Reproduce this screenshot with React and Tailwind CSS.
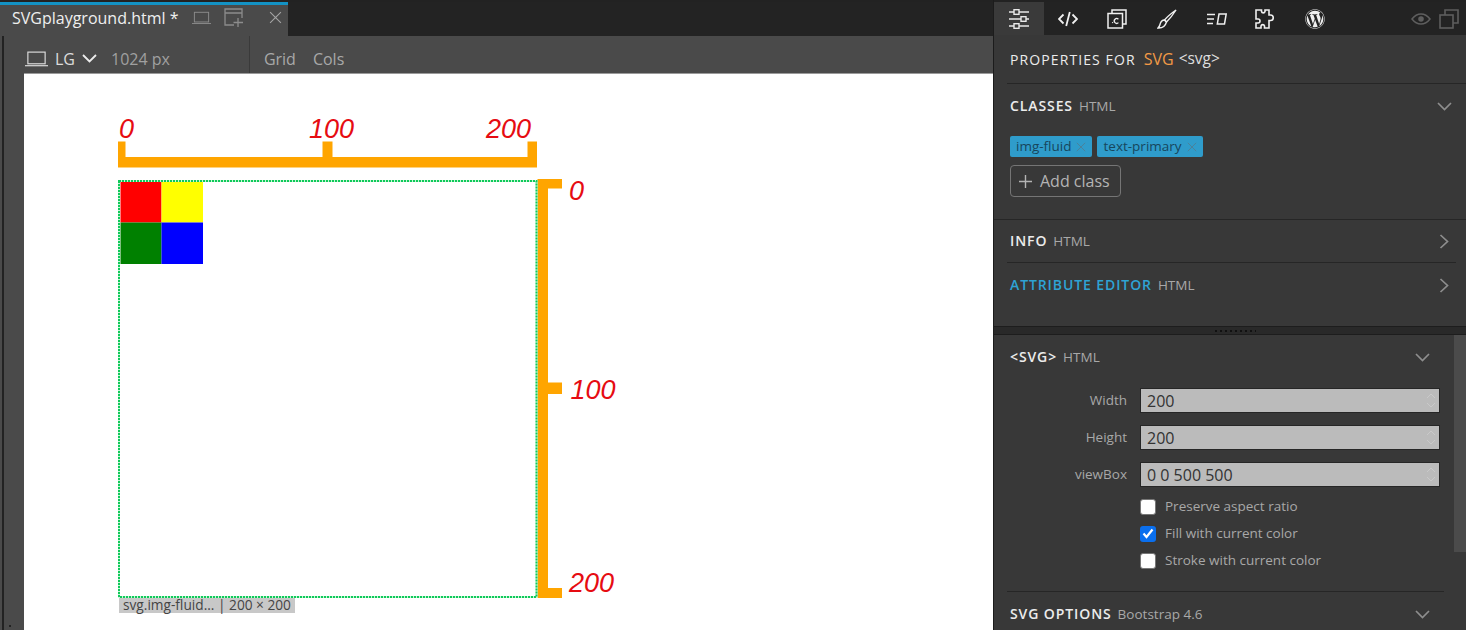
import React from "react";
import { FaWordpress } from "react-icons/fa";

const font = { fontFamily: '"Open Sans", "Noto Sans", sans-serif' };

function Sliders() {
  return (
    <svg width="22" height="22" viewBox="0 0 22 22" fill="none" stroke="#e8e8e8" strokeWidth="1.4">
      <path d="M1 4H6M11 4H21M1 11H13M18 11H21M1 18H6M11 18H21" />
      <rect x="6" y="1.7" width="5" height="4.6" fill="#3a3a3a" />
      <rect x="13" y="8.7" width="5" height="4.6" fill="#3a3a3a" />
      <rect x="6" y="15.7" width="5" height="4.6" fill="#3a3a3a" />
    </svg>
  );
}
function CodeIcon() {
  return (
    <svg width="20" height="16" viewBox="0 0 20 16" fill="none" stroke="#f0f0f0" strokeWidth="1.8">
      <path d="M5.5 3.5L1 8l4.5 4.5M14.5 3.5L19 8l-4.5 4.5M11.8 1L8.2 15" />
    </svg>
  );
}
function CssIcon() {
  return (
    <svg width="20" height="20" viewBox="0 0 20 20" fill="none" stroke="#efefef" strokeWidth="1.5">
      <path d="M5 4V1h14v14h-3" />
      <rect x="1" y="4.5" width="14.5" height="14.5" />
      <circle cx="5.6" cy="13.6" r="0.7" fill="#efefef" stroke="none" />
      <path d="M11.4 10.2a2.4 2.4 0 1 0 0 3.4" strokeWidth="1.3" />
    </svg>
  );
}
function BrushIcon() {
  return (
    <svg width="20" height="20" viewBox="0 0 20 20" fill="none" stroke="#efefef" strokeWidth="1.4">
      <path d="M19 1C15.5 3.5 10 8 7.5 11l2 2C12.5 10 16.5 5 19 1z" />
      <path d="M7.5 11C4.5 11 3.5 13.5 3 15.5 2.7 17 2 18 1 19c3.500.2 7-.8 8.500-6z" />
    </svg>
  );
}
function BlockIcon() {
  return (
    <svg width="20" height="12" viewBox="0 0 20 12" fill="none" stroke="#efefef" strokeWidth="1.5">
      <path d="M0 1.500H8M0 6H7M0 10.500H6" />
      <path d="M12 1h7.200l-1.700 10h-7.200z" />
    </svg>
  );
}
function PuzzleIcon() {
  return (
    <svg width="21" height="20" viewBox="0 0 21 20" fill="none" stroke="#efefef" strokeWidth="1.6">
      <path d="M1 1h5.500v1.500a1.800 1.800 0 0 0 3.500 0V1h4v5h1.500a2.300 2.300 0 0 1 0 5.500H14V19H9.500v-2a1.800 1.800 0 0 0-3.500 0v2H1v-5h2a1.800 1.800 0 0 0 0-4H1z" />
    </svg>
  );
}
function EyeIcon() {
  return (
    <svg width="20" height="12" viewBox="0 0 20 12" fill="none" stroke="#5e5e5e" strokeWidth="1.5">
      <path d="M1 6c2.500-3.300 5.500-5 9-5s6.500 1.700 9 5c-2.500 3.300-5.500 5-9 5S3.500 9.300 1 6z" />
      <circle cx="10" cy="6" r="2.800" fill="#5e5e5e" stroke="none" />
    </svg>
  );
}
function DupIcon() {
  return (
    <svg width="20" height="20" viewBox="0 0 20 20" fill="none" stroke="#5e5e5e" strokeWidth="1.6">
      <path d="M6 6V1h13v13h-5" />
      <rect x="1" y="6" width="13" height="13" />
    </svg>
  );
}
function Laptop({ w, h, color, sw = 1.2 }) {
  return (
    <svg width={w} height={h} viewBox="0 0 24 16" fill="none" stroke={color} strokeWidth={sw}>
      <rect x="3" y="0.800" width="18" height="12.200" />
      <path d="M0 15H24" />
    </svg>
  );
}
function NewWin() {
  return (
    <svg width="20" height="20" viewBox="0 0 20 20" fill="none" stroke="#8c8c8c" strokeWidth="1.3">
      <path d="M10 17H1V1h17v9M1 5h17" />
      <path d="M14 10v9M9.500 14.500H19" />
    </svg>
  );
}
function X({ size, color, sw = 1 }) {
  return (
    <svg width={size} height={size} viewBox="0 0 12 12" fill="none" stroke={color} strokeWidth={sw}>
      <path d="M1 1L11 11M11 1L1 11" />
    </svg>
  );
}
function ChevDown({ color = "#8e8e8e", w = 15, sw = 1.7 }) {
  return (
    <svg width={w} height="9" viewBox="0 0 15 9" fill="none" stroke={color} strokeWidth={sw}>
      <path d="M1 1L7.500 7.500L14 1" />
    </svg>
  );
}
function ChevRight() {
  return (
    <svg width="10" height="15" viewBox="0 0 10 15" fill="none" stroke="#8e8e8e" strokeWidth="1.7">
      <path d="M1.500 1L8.500 7.500L1.500 14" />
    </svg>
  );
}

function Header({ title, sub, titleClass = "text-[#ececec]", children }) {
  return (
    <div className="flex items-center justify-between pl-[16px]">
      <div className="flex items-baseline gap-[6px] leading-[18px]">
        <span className={`text-[14px] font-semibold tracking-[0.9px] ${titleClass}`}>{title}</span>
        <span className="text-[13.5px] text-[#a8a8a8]">{sub}</span>
      </div>
      {children}
    </div>
  );
}

function Tag({ text }) {
  return (
    <div className="flex h-[21px] items-center gap-[5px] rounded-[2px] bg-[#2f9ccb] px-[6px] text-[13.5px] text-[#17465c]">
      <span>{text}</span>
      <X size={10} color="#4f7d92" />
    </div>
  );
}

function Field({ label, value }) {
  return (
    <div className="flex h-[25px] items-center">
      <div className="w-[133px] text-right text-[13.5px] text-[#a8a8a8]">{label}</div>
      <div className="ml-[13px] flex h-[25px] w-[300px] items-center justify-between border border-[#262626] bg-[#bbbbbb] pl-[6px] pr-[3px] text-[16px] text-[#333]">
        <span>{value}</span>
        <div className="flex flex-col gap-[3px]">
          <svg width="10" height="6" viewBox="0 0 10 6" fill="none" stroke="#c9c9c9"><path d="M1 5L5 1L9 5" /></svg>
          <svg width="10" height="6" viewBox="0 0 10 6" fill="none" stroke="#c9c9c9"><path d="M1 1L5 5L9 1" /></svg>
        </div>
      </div>
    </div>
  );
}

function Check({ label, checked }) {
  return (
    <div className="flex h-[15px] items-center gap-[9px] pl-[146px]">
      {checked ? (
        <div className="flex h-[16px] w-[16px] items-center justify-center rounded-[3px] bg-[#0a6fee]">
          <svg width="12" height="11" viewBox="0 0 12 11" fill="none" stroke="#fff" strokeWidth="2.200"><path d="M1.500 5.500L4.500 9L10.500 1.500" /></svg>
        </div>
      ) : (
        <div className="h-[16px] w-[16px] rounded-[3px] border border-[#777] bg-white" />
      )}
      <span className="text-[13.5px] text-[#a8a8a8]">{label}</span>
    </div>
  );
}

function Canvas() {
  const o = "#ffa500";
  const t = { fontFamily: '"Liberation Sans", Arial, sans-serif', fontStyle: "italic", fontSize: 27, fill: "#e60c12" };
  return (
    <div className="relative min-h-0 flex-1 overflow-hidden bg-white">
      {/* canvas origin = page (24,74) */}
      <svg width="970" height="556" viewBox="24 74 970 556" className="block">
        <path fill={o} d="M118 141.500h7.500V157H322.500V141.500h10V157H527.500V141.500h9.500V167.500H118z" />
        <path fill={o} d="M537.500 179H562V188.500H548V382.500H562V394H548V588H562V598H537.500z" />
        <text x="119" y="138" style={t}>0</text>
        <text x="309" y="138" style={t}>100</text>
        <text x="486" y="138" style={t}>200</text>
        <text x="569" y="200" style={t}>0</text>
        <text x="570.500" y="399" style={t}>100</text>
        <text x="569" y="592" style={t}>200</text>
        <rect x="120.500" y="181.500" width="41" height="41" fill="#ff0000" />
        <rect x="161.500" y="181.500" width="41.500" height="41" fill="#ffff00" />
        <rect x="120.500" y="222.500" width="41" height="41.500" fill="#008000" />
        <rect x="161.500" y="222.500" width="41.500" height="41.500" fill="#0000ff" />
        <rect x="119" y="181" width="417.500" height="416" fill="none" stroke="#c8f7d8" strokeWidth="2" />
        <rect x="119" y="181" width="417.500" height="416" fill="none" stroke="#10c95a" strokeWidth="2" strokeDasharray="2 1" />
      </svg>
      <div className="absolute left-[95px] top-[524px] flex h-[15px] w-[176px] items-center bg-[#c8c8c8] pl-[4px] text-[13.7px] text-[#444]">
        svg.img-fluid... | 200 × 200
      </div>
    </div>
  );
}

export default function App() {
  return (
    <div style={font} className="flex h-[630px] w-[1466px] overflow-hidden bg-[#222]">
      {/* Left */}
      <div className="flex h-full w-[994px] shrink-0 flex-col border-r border-[#1c1c1c] pt-[2px]">
        <div className="flex h-[34px] shrink-0 bg-[#232323]">
          <div className="flex h-[34px] w-[288px] items-center border-t-[3px] border-[#1392c4] bg-[#4a4a4a] pb-[6px] pl-[12px]">
            <span className="w-[166px] whitespace-nowrap text-[16px] leading-none text-[#efefef]">SVGplayground.html *</span>
            <span className="ml-[14px]"><Laptop w={19} h={14} color="#8c8c8c" sw={1.2} /></span>
            <span className="ml-[13px]"><NewWin /></span>
            <span className="ml-[25px]"><X size={13} color="#a5a5a5" sw={1} /></span>
          </div>
        </div>
        <div className="flex min-h-0 flex-1">
          <div className="w-[24px] shrink-0 bg-[#4a4a4a] pl-[2px]">
            <div className="relative h-full border-l-2 border-[#222]">
              <div className="absolute bottom-[3px] left-[5px] h-[2px] w-[2px] bg-[#222]" />
            </div>
          </div>
          <div className="flex min-w-0 flex-1 flex-col">
            <div className="flex h-[38px] shrink-0 items-stretch border-b border-[#9a9a9a] bg-[#4a4a4a]">
              <div className="flex items-center pt-[8px]">
                <span className="ml-[1px]"><Laptop w={23} h={16} color="#dedede" sw={1.200} /></span>
                <span className="ml-[7px] text-[16px] text-[#dcdcdc]">LG</span>
                <span className="ml-[7px]"><ChevDown color="#ececec" sw={1.800} /></span>
                <span className="ml-[14px] text-[16px] text-[#a0a0a0]">1024 px</span>
              </div>
              <div className="ml-[79px] h-full w-[1px] bg-[#3a3a3a]" />
              <div className="flex items-center pt-[8px]">
                <span className="ml-[14px] text-[16px] text-[#a8a8a8]">Grid</span>
                <span className="ml-[17px] text-[16px] text-[#a8a8a8]">Cols</span>
              </div>
            </div>
            <Canvas />
          </div>
        </div>
      </div>

      {/* Right */}
      <div className="flex h-full min-w-0 flex-1 flex-col pt-[2px]">
        <div className="flex h-[33px] shrink-0 items-center bg-[#232323] pr-[7px]">
          <div className="flex h-full w-[50px] items-center justify-center bg-[#3a3a3a]"><Sliders /></div>
          <div className="ml-[14px]"><CodeIcon /></div>
          <div className="ml-[29px]"><CssIcon /></div>
          <div className="ml-[30px]"><BrushIcon /></div>
          <div className="ml-[30px]"><BlockIcon /></div>
          <div className="ml-[28px]"><PuzzleIcon /></div>
          <div className="ml-[29px]"><FaWordpress size={20} color="#efefef" /></div>
          <div className="ml-auto flex items-center gap-[8px]"><EyeIcon /><DupIcon /></div>
        </div>

        <div className="flex min-h-0 flex-1 flex-col bg-[#383838]">
          <div className="h-[291px] shrink-0 pl-[13px]">
            <div className="-ml-[13px] pl-[13px]">
              <div className="flex h-[49px] items-center gap-[8px] border-b border-[#262626] pl-[3px] text-[14px]">
                <span className="tracking-[1.100px] text-[#ececec]">PROPERTIES FOR</span>
                <span className="text-[16px] text-[#f29a46]">SVG</span>
                <span className="-ml-[3px] text-[15.500px] text-[#dedede]">&lt;svg&gt;</span>
              </div>
            </div>
            <div className="h-[136px] border-b border-[#262626] pr-[10px] -ml-[13px] pl-[13px]">
              <div className="-ml-[13px] pt-[13px] pr-[4px]">
                <Header title="CLASSES" sub="HTML"><ChevDown /></Header>
              </div>
              <div className="mt-[21px] flex gap-[5px] pl-[3px]">
                <Tag text="img-fluid" />
                <Tag text="text-primary" />
              </div>
              <div className="ml-[3px] mt-[8px] flex h-[32px] w-[111px] items-center gap-[8px] rounded-[4px] border border-[#757575] pl-[8px] text-[16px] text-[#b4b4b4]">
                <svg width="13" height="13" viewBox="0 0 13 13" fill="none" stroke="#b4b4b4" strokeWidth="1.400"><path d="M6.500 0V13M0 6.500H13" /></svg>
                <span>Add class</span>
              </div>
            </div>
            <div className="-ml-[13px] flex h-[42px] items-center pr-[17px]">
              <div className="w-full"><Header title="INFO" sub="HTML"><ChevRight /></Header></div>
            </div>
            <div className="mr-[10px] border-t border-[#262626]" />
            <div className="-ml-[13px] flex h-[44px] items-center pr-[17px]">
              <div className="w-full"><Header title="ATTRIBUTE EDITOR" sub="HTML" titleClass="text-[#2ea3d4]"><ChevRight /></Header></div>
            </div>
          </div>

          <div className="flex h-[9px] shrink-0 items-center justify-center border-y border-[#1d1d1d] bg-[#292929] pl-[10px]">
            <div className="h-[2px] w-[41px] bg-[repeating-linear-gradient(90deg,#111_0_2px,transparent_2px_5px)]" />
          </div>

          <div className="flex min-h-0 flex-1">
            <div className="min-w-0 flex-1 pl-[13px]">
              <div className="-ml-[13px] flex h-[44px] items-center pr-[14px]">
                <div className="w-full"><Header title="<SVG>" sub="HTML"><ChevDown /></Header></div>
              </div>
              <div className="-ml-[13px] mt-[9px] flex flex-col gap-[12px]">
                <Field label="Width" value="200" />
                <Field label="Height" value="200" />
                <Field label="viewBox" value="0 0 500 500" />
              </div>
              <div className="-ml-[13px] mt-[12px] flex flex-col gap-[12px]">
                <Check label="Preserve aspect ratio" />
                <Check label="Fill with current color" checked />
                <Check label="Stroke with current color" />
              </div>
              <div className="mt-[23px] border-t border-[#262626]" />
              <div className="-ml-[13px] flex h-[44px] items-center pr-[14px]">
                <div className="w-full"><Header title="SVG OPTIONS" sub="Bootstrap 4.6"><ChevDown /></Header></div>
              </div>
            </div>
            <div className="ml-[10px] w-[12px] shrink-0">
              <div className="h-[217px] bg-[#4b4b4b]" />
            </div>
          </div>
        </div>
      </div>
    </div>
  );
}
